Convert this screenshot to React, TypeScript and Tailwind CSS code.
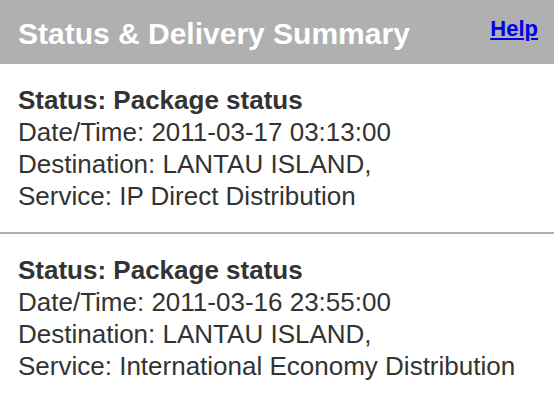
import React from "react";

const entries = [
  {
    status: "Package status",
    date: "2011-03-17 03:13:00",
    dest: "LANTAU ISLAND,",
    service: "IP Direct Distribution",
  },
  {
    status: "Package status",
    date: "2011-03-16 23:55:00",
    dest: "LANTAU ISLAND,",
    service: "International Economy Distribution",
  },
];

export default function App() {
  return (
    <div className="w-[554px] h-[401px] bg-white overflow-hidden" style={{ fontFamily: '"Liberation Sans", Arial, sans-serif' }}>
      <div className="h-[64px] bg-[#b0b0b0] flex items-start justify-between pl-[18px] pr-[16px]">
        <h1 className="text-white font-bold text-[30px] leading-[30px] mt-[19px]">Status &amp; Delivery Summary</h1>
        <a href="#" className="text-[#0000ee] font-bold underline text-[22px] leading-[22px] mt-[18px]">Help</a>
      </div>
      {entries.map((e, i) => (
        <div key={i} className={"px-[18px] pt-[20px] pb-[20px] text-[#333333] text-[26px] leading-[32px]" + (i === 0 ? " border-b-2 border-[#b0b0b0]" : "")}>
          <div className="font-bold">Status: {e.status}</div>
          <div>Date/Time: {e.date}</div>
          <div>Destination: {e.dest}</div>
          <div>Service: {e.service}</div>
        </div>
      ))}
    </div>
  );
}
